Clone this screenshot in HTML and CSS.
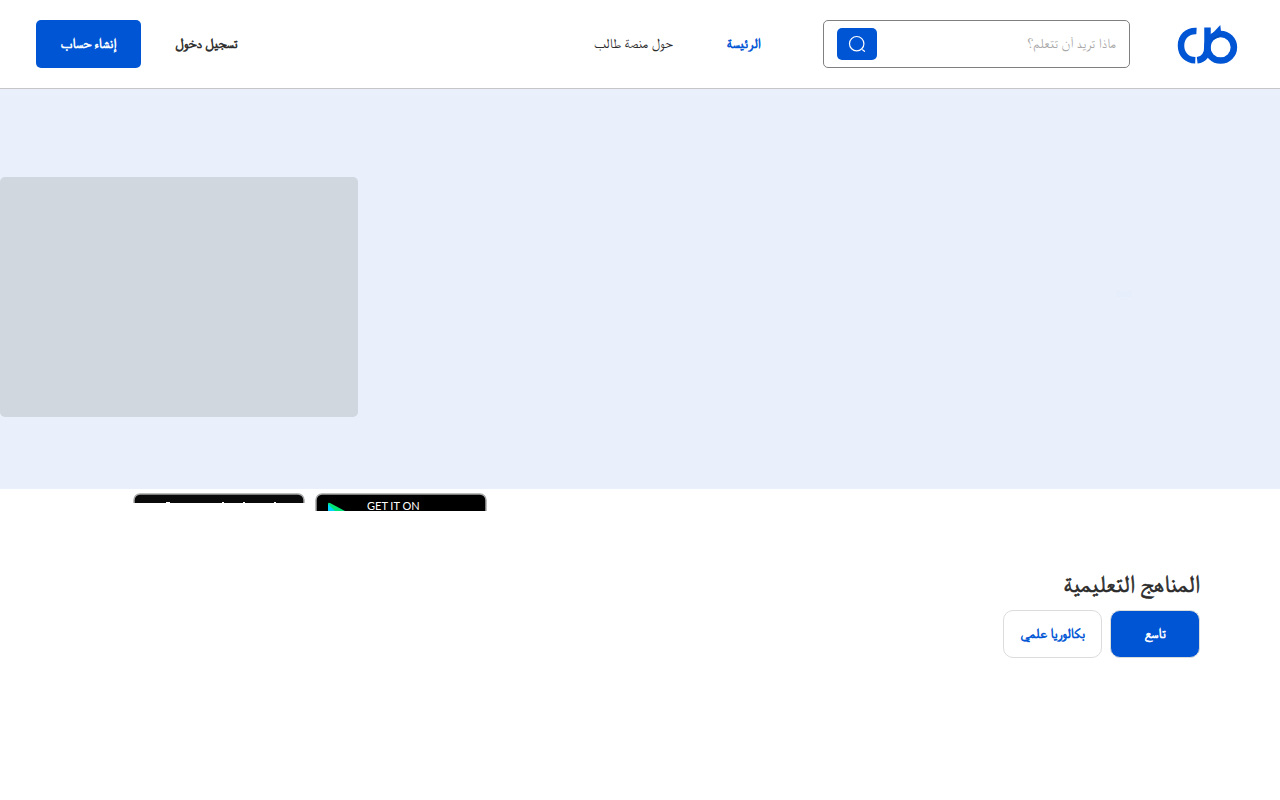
FILE: index.html
```html
<!DOCTYPE html>
<html lang="ar" dir="rtl">
<head>
  <meta charset="UTF-8">
  <meta name="viewport" content="width=device-width, initial-scale=1">
  <title>منصة طالب</title>
  <link rel="stylesheet" href="styles.css">
</head>
<body>

  <header class="header">
    <a class="logo" href="#" aria-label="منصة طالب">
      <svg width="62" height="40" viewBox="0 0 62 40" fill="none" stroke="#0055d5" stroke-width="6.500">
        <path d="M18.500 7C9 6.500 3 13 3 21.500C3 30 8.500 36 17.300 36.300"/>
        <path d="M29.500 3.500V22C29.500 31 26 35.500 19.200 36.300"/>
        <circle cx="42.600" cy="23.300" r="13.300"/>
        <path d="M31.500 12.500L42.300 1L43.500 12L35 16Z" fill="#0055d5" stroke="none"/>
        <path d="M34 15L43.500 11" stroke="#0a49ad" stroke-width="1"/>
      </svg>
    </a>

    <form class="search">
      <input type="search" placeholder="ماذا تريد أن تتعلم؟" aria-label="ماذا تريد أن تتعلم؟">
      <button type="button" class="search-btn" aria-label="بحث">
        <svg width="18" height="18" viewBox="0 0 18 18" fill="none" stroke="#fff" stroke-width="1.200" stroke-linecap="round">
          <circle cx="8.700" cy="8.700" r="7.200"/>
          <path d="M14.500 14.800L16.500 16.300"/>
        </svg>
      </button>
    </form>

    <nav class="nav">
      <a class="active" href="#">الرئيسة</a>
      <a href="#">حول منصة طالب</a>
    </nav>

    <div class="actions">
      <a class="login" href="#">تسجيل دخول</a>
      <button type="button" class="signup">إنشاء حساب</button>
    </div>
  </header>

  <section class="hero">
    <div class="hero-text"></div>
    <div class="hero-image"></div>
  </section>

  <div class="stores">
    <a class="store" href="#" aria-label="Google Play">
      <svg width="172" height="18" viewBox="0 0 172 18">
        <rect x="1" y="1" width="170" height="50" rx="6" fill="#000" stroke="#a6a6a6" stroke-width="1.500"/>
        <path d="M13 11Q13 9 15 10L30 18H13Z" fill="#00e676"/>
        <path d="M13 11L20 18H13Z" fill="#00d4ff"/>
        <text x="52" y="17" direction="ltr">GET IT ON</text>
      </svg>
    </a>
    <a class="store" href="#" aria-label="App Store">
      <svg width="172" height="10" viewBox="0 0 172 10">
        <rect x="1" y="1" width="170" height="50" rx="6" fill="#0a0a0a" stroke="#a6a6a6" stroke-width="1.500"/>
        <path d="M33 9.500h4M89 9.500h2M110 9.500h2M141 9.500h2" stroke="#fff"/>
      </svg>
    </a>
  </div>

  <main class="courses">
    <h2>المناهج التعليمية</h2>
    <div class="tabs">
      <button type="button" class="tab selected">تاسع</button>
      <button type="button" class="tab">بكالوريا علمي</button>
    </div>
  </main>

</body>
</html>
```

FILE: styles.css
```css
* {
  box-sizing: border-box;
}

body {
  margin: 0;
  font-family: FreeSerif, "Noto Naskh Arabic", "Noto Sans", serif;
  font-size: 14px;
  color: #2c2c2c;
  background: #fff;
}

a {
  color: inherit;
  text-decoration: none;
}

button {
  font: inherit;
  cursor: pointer;
}

/* heavier than regular without the wider bold letters */
h2,
.nav .active,
.login,
.signup,
.tab {
  font-weight: 400;
  -webkit-text-stroke: 0.6px currentColor;
}

.header {
  display: flex;
  align-items: center;
  height: 89px;
  padding: 0 40px 0 36px;
  border-bottom: 1px solid #c6c6c6;
}

.logo {
  display: flex;
}

.logo svg {
  overflow: visible;
}

.search {
  display: flex;
  align-items: center;
  width: 24vw;
  height: 48px;
  margin-right: 48px;
  padding: 0 13px;
  border: 1px solid #808080;
  border-radius: 5px;
}

.search input {
  flex: 1;
  min-width: 0;
  padding: 0;
  border: 0;
  outline: 0;
  font: inherit;
  background: none;
}

.search input::placeholder {
  color: #a9a9a9;
}

.search-btn {
  display: flex;
  align-items: center;
  justify-content: center;
  width: 40px;
  height: 32px;
  padding: 0;
  border: 0;
  border-radius: 5px;
  background: #0055d5;
}

.nav {
  display: flex;
  gap: 54px;
  margin-right: 62px;
}

.nav .active {
  color: #0055d5;
}

.actions {
  display: flex;
  align-items: center;
  gap: 34px;
  margin-right: auto;
}

.signup {
  height: 48px;
  padding: 0 25px;
  border: 0;
  border-radius: 5px;
  color: #fff;
  background: #0055d5;
}

.hero {
  display: flex;
  align-items: center;
  justify-content: space-between;
  height: 400px;
  padding-top: 16px;
  background: #e9f0fb;
}

.hero-text {
  width: 16px;
  height: 6px;
  margin: 0 148px 6px 0;
  border-radius: 2px;
  background: #e6edfb;
}

.hero-image {
  width: 28%;
  height: 240px;
  border-radius: 5px;
  background: #d0d7df;
}

.stores {
  display: flex;
  justify-content: flex-end;
  align-items: flex-start;
  gap: 10px;
  height: 80px;
  padding: 4px 0 0 133px;
}

.store {
  display: flex;
}

.store text {
  font-family: Lato, sans-serif;
  font-size: 11px;
  fill: #fff;
}

.courses {
  padding: 0 80px;
}

.courses h2 {
  margin: 0 0 8px;
  font-size: 24px;
  line-height: 33px;
}

.tabs {
  display: flex;
  gap: 8px;
}

.tab {
  min-width: 90px;
  height: 48px;
  padding: 0 16px;
  border: 1px solid #dcdcdc;
  border-radius: 10px;
  color: #0055d5;
  background: #fff;
}

.tab.selected {
  color: #fff;
  background: #0055d5;
}
```
